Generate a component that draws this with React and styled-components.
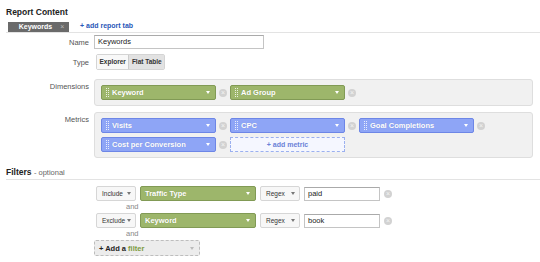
import React from 'react'
import styled, { createGlobalStyle } from 'styled-components'

const Global = createGlobalStyle`
  body {
    margin: 0;
    background: #fff;
    font-family: "Liberation Sans", Arial, sans-serif;
    font-size: 7px;
    color: #222;
  }
`

const Page = styled.div`
  width: 540px;
  height: 262px;
  padding: 6px 0 0 6px;
  box-sizing: border-box;
  overflow: hidden;
`

const Heading = styled.div`
  font-size: 8.5px;
  font-weight: bold;
  color: #222;
  height: 13px;
  line-height: 12px;
  span {
    font-weight: normal;
    font-size: 7.5px;
    color: #666;
  }
`

const TabBar = styled.div`
  display: flex;
  align-items: flex-end;
  gap: 11px;
  border-bottom: 1px solid #e3e3e3;
  padding-left: 2px;
  margin-top: 2px;
`

const Tab = styled.div`
  width: 61px;
  height: 10px;
  background: #6a6a6a;
  color: #fff;
  font-weight: bold;
  font-size: 7px;
  line-height: 10px;
  display: flex;
  justify-content: center;
  gap: 8px;
  box-sizing: border-box;
  padding-left: 6px;
  span {
    color: #bbb;
    font-weight: normal;
  }
`

const TabLink = styled.div`
  color: #2a57b8;
  font-weight: bold;
  font-size: 7px;
  line-height: 10px;
  padding-bottom: 1px;
`

const Form = styled.div`
  display: grid;
  grid-template-columns: 83px 1fr;
  column-gap: 5px;
  align-items: start;
  margin-top: 2px;
`

const Label = styled.div`
  text-align: right;
  color: #555;
  font-size: 7.5px;
  padding-top: ${p => p.$top ?? 3}px;
`

const Field = styled.div`
  margin-bottom: ${p => p.$mb ?? 5}px;
`

const TextInput = styled.div`
  width: ${p => p.$w || 170}px;
  height: 14px;
  box-sizing: border-box;
  border: 1px solid #c4c4c4;
  border-top-color: #aaa;
  background: #fff;
  font-size: 7.5px;
  line-height: 12px;
  padding-left: 3px;
  color: #222;
`

const Segment = styled.div`
  display: inline-flex;
  margin-left: 2px;
  border: 1px solid #d4d4d4;
  border-radius: 2px;
  height: 16px;
  box-sizing: border-box;
  background: #f6f6f6;
`

const SegButton = styled.div`
  font-size: 6.5px;
  font-weight: bold;
  color: #333;
  line-height: 14px;
  padding: 0 2.5px;
  background: ${p => (p.$active ? '#e2e2e2' : '#f8f8f8')};
  border-left: ${p => (p.$active ? '1px solid #ccc' : 'none')};
`

const Box = styled.div`
  width: 439px;
  box-sizing: border-box;
  background: #f1f1f1;
  border: 1px solid #dedede;
  border-radius: 3px;
  padding: 5px 6px 5px 6px;
  display: grid;
  grid-template-columns: repeat(3, 129px);
  row-gap: 4px;
`

const Item = styled.div`
  display: flex;
  align-items: center;
  gap: 3px;
`

const Pill = styled.div`
  width: ${p => p.$w || 115}px;
  height: 15px;
  box-sizing: border-box;
  border-radius: 2px;
  border: 1px solid ${p => (p.$blue ? '#6d86e6' : '#819a55')};
  background: ${p => (p.$blue ? '#8ea5f6' : '#9db66b')};
  color: #fff;
  font-weight: bold;
  font-size: 7.5px;
  display: flex;
  align-items: center;
  padding: 0 5px 0 4px;
  gap: 3px;
  text-shadow: 0 0 1px rgba(0, 0, 0, 0.15);
`

const Grip = styled.div`
  width: 1px;
  height: 9px;
  border-left: 1px dotted rgba(255, 255, 255, 0.8);
  border-right: 1px dotted rgba(255, 255, 255, 0.8);
  flex: none;
`

const PillText = styled.div`
  flex: 1;
  white-space: nowrap;
`

const Caret = styled.div`
  width: 0;
  height: 0;
  border-left: 2.5px solid transparent;
  border-right: 2.5px solid transparent;
  border-top: 3px solid ${p => p.$color || '#fff'};
`

const Remove = styled.div`
  width: 8px;
  height: 8px;
  border-radius: 50%;
  background: #d2d2d2;
  color: #f4f4f4;
  font-size: 7px;
  line-height: 8px;
  text-align: center;
  flex: none;
`

const AddMetric = styled.div`
  width: 115px;
  height: 15px;
  box-sizing: border-box;
  border: 1px dashed #9bb0ef;
  background: #f5f7ff;
  color: #6b82d8;
  font-size: 7px;
  font-weight: bold;
  line-height: 13px;
  text-align: center;
`

const Rule = styled.div`
  border-bottom: 1px solid #e3e3e3;
  margin-top: 8px;
`

const Filters = styled.div`
  padding: 6px 0 0 88px;
  display: flex;
  flex-direction: column;
`

const FilterRow = styled.div`
  display: flex;
  align-items: center;
  gap: 4px;
  padding-left: 2px;
`

const SelectButton = styled.div`
  width: ${p => p.$w || 40}px;
  height: 15px;
  box-sizing: border-box;
  border: 1px solid #d6d6d6;
  border-radius: 2px;
  background: #f7f7f7;
  font-size: 6.5px;
  color: #333;
  display: flex;
  align-items: center;
  justify-content: space-between;
  padding: 0 4px 0 5px;
`

const And = styled.div`
  color: #888;
  font-size: 7.5px;
  padding-left: 32px;
  height: 11px;
  line-height: 12px;
  margin-bottom: 1px;
`

const AddFilter = styled.div`
  width: 106px;
  height: 16px;
  box-sizing: border-box;
  border: 1px dashed #bdbdbd;
  border-radius: 2px;
  background: #ececec;
  font-size: 7.5px;
  font-weight: bold;
  color: #222;
  display: flex;
  align-items: center;
  justify-content: space-between;
  padding: 0 5px 0 4px;
  span {
    color: #7c9a3e;
  }
`

const PillItem = ({ label, blue, w }) => (
  <Item>
    <Pill $blue={blue} $w={w}>
      <Grip />
      <PillText>{label}</PillText>
      <Caret />
    </Pill>
    <Remove>×</Remove>
  </Item>
)

const FilterLine = ({ mode, dim, value }) => (
  <FilterRow>
    <SelectButton>
      {mode}
      <Caret $color="#777" />
    </SelectButton>
    <Pill $w={116}>
      <PillText>{dim}</PillText>
      <Caret />
    </Pill>
    <SelectButton $w={40}>
      Regex
      <Caret $color="#777" />
    </SelectButton>
    <TextInput $w={76}>{value}</TextInput>
    <Remove>×</Remove>
  </FilterRow>
)

export default function App() {
  return (
    <Page>
      <Global />
      <Heading>Report Content</Heading>
      <TabBar>
        <Tab>
          Keywords <span>×</span>
        </Tab>
        <TabLink>+ add report tab</TabLink>
      </TabBar>
      <Form>
        <Label $top={3}>Name</Label>
        <Field $mb={5}>
          <TextInput>Keywords</TextInput>
        </Field>
        <Label $top={4}>Type</Label>
        <Field $mb={9}>
          <Segment>
            <SegButton>Explorer</SegButton>
            <SegButton $active>Flat Table</SegButton>
          </Segment>
        </Field>
        <Label $top={3}>Dimensions</Label>
        <Field $mb={6}>
          <Box>
            <PillItem label="Keyword" />
            <PillItem label="Ad Group" />
          </Box>
        </Field>
        <Label $top={3}>Metrics</Label>
        <Field $mb={0}>
          <Box>
            <PillItem label="Visits" blue />
            <PillItem label="CPC" blue />
            <PillItem label="Goal Completions" blue />
            <PillItem label="Cost per Conversion" blue />
            <AddMetric>+ add metric</AddMetric>
          </Box>
        </Field>
      </Form>
      <Rule>
        <Heading>
          Filters <span>- optional</span>
        </Heading>
      </Rule>
      <Filters>
        <FilterLine mode="Include" dim="Traffic Type" value="paid" />
        <And>and</And>
        <FilterLine mode="Exclude" dim="Keyword" value="book" />
        <And>and</And>
        <AddFilter>
          <div>
            + Add a <span>filter</span>
          </div>
          <Caret $color="#bbb" />
        </AddFilter>
      </Filters>
    </Page>
  )
}
